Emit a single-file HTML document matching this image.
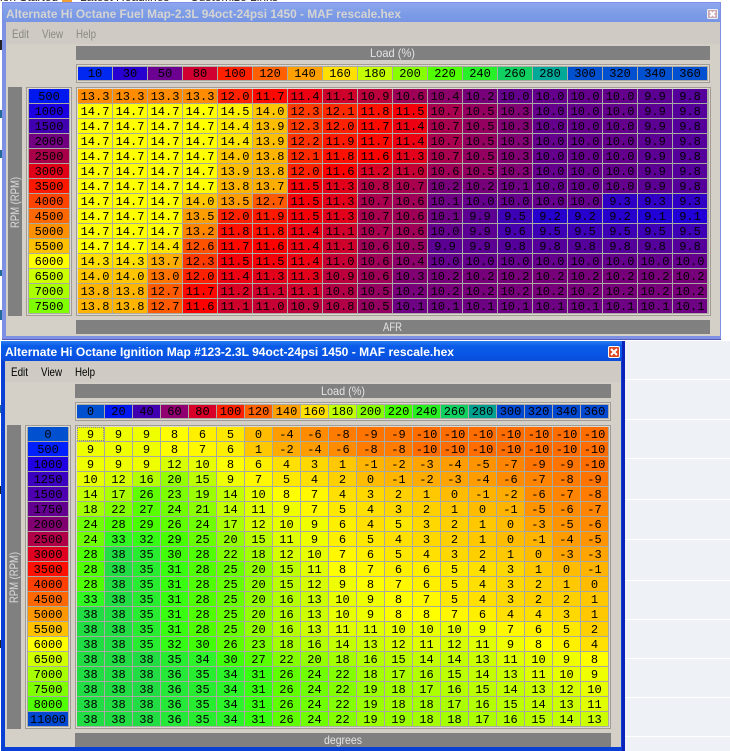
<!DOCTYPE html>
<html><head><meta charset="utf-8"><style>
html,body{margin:0;padding:0;background:#fff}
#p{position:relative;width:730px;height:751px;overflow:hidden;background:#fff;font-family:"Liberation Sans",sans-serif}
.a{position:absolute;box-sizing:border-box}
.g{position:absolute;display:grid;gap:1px;font:12px/16px "Liberation Mono",monospace;color:#000;text-align:center;background:#a8a8a2}
.g i{font-style:normal;display:block;overflow:hidden}
.f{box-sizing:border-box;position:absolute;background:#aaa9a2;border:1px solid #a09c94;box-shadow:inset 0 0 0 1px #dcd9d2}
.bar{position:absolute;background:#808080}
.c18{grid-template-columns:repeat(18,34px);grid-auto-rows:14px}
.c19{grid-template-columns:repeat(19,27px);grid-auto-rows:14px}
.h18{grid-template-columns:repeat(18,34px);grid-auto-rows:13px;line-height:14px}
.h19{grid-template-columns:repeat(19,27px);grid-auto-rows:13px;line-height:14px}
.r{grid-template-columns:40px;grid-auto-rows:14px}
.a147{background:#ffff00}.a145{background:#ffef00}.a144{background:#ffe600}.a143{background:#ffde00}.a140{background:#ffc500}.a139{background:#ffbd00}.a138{background:#ffb500}.a137{background:#ffad00}.a135{background:#ff9c00}.a133{background:#ff8c00}.a132{background:#ff8400}.a130{background:#ff7300}.a127{background:#ff5a00}.a126{background:#ff5200}.a123{background:#ff3a00}.a122{background:#ff3100}.a121{background:#ff2900}.a120{background:#ff2100}.a119{background:#ff1900}.a118{background:#ff1000}.a117{background:#ff0800}.a116{background:#ff0000}.a115{background:#f50009}.a114{background:#ec0012}.a113{background:#e2001a}.a112{background:#d80023}.a111{background:#ce002c}.a110{background:#c50034}.a109{background:#bb003d}.a108{background:#b10046}.a107{background:#a8004f}.a106{background:#9e0057}.a105{background:#940060}.a104{background:#8b0069}.a103{background:#810072}.a102{background:#77007a}.a101{background:#6e0083}.a100{background:#64008c}.a99{background:#5c0094}.a98{background:#55009b}.a96{background:#4600ac}.a95{background:#3e00b4}.a93{background:#3000c5}.a92{background:#2800cd}.a91{background:#2000d6}
.bn10{background:#ff6c00}.bn9{background:#ff7400}.bn8{background:#ff7c00}.bn7{background:#ff8400}.bn6{background:#ff8c00}.bn5{background:#ff9400}.bn4{background:#ff9c00}.bn3{background:#ffa400}.bn2{background:#ffac00}.bn1{background:#ffb400}.b0{background:#ffbc00}.b1{background:#ffc800}.b2{background:#ffd000}.b3{background:#ffd800}.b4{background:#ffe000}.b5{background:#ffe800}.b6{background:#fff000}.b7{background:#fff800}.b8{background:#ffff00}.b9{background:#f0ff00}.b10{background:#e8ff00}.b11{background:#e0ff00}.b12{background:#d8ff00}.b13{background:#ccff00}.b14{background:#c4ff00}.b15{background:#bcff00}.b16{background:#b4ff00}.b17{background:#acff00}.b18{background:#a4ff00}.b19{background:#9cff00}.b20{background:#94ff00}.b21{background:#8cff00}.b22{background:#84ff00}.b23{background:#7cff00}.b24{background:#70ff00}.b25{background:#68ff00}.b26{background:#60ff00}.b27{background:#58ff00}.b28{background:#50ff00}.b29{background:#48ff00}.b30{background:#40ff08}.b31{background:#38ff10}.b32{background:#34fc14}.b33{background:#30f820}.b34{background:#2cf428}.b35{background:#28ec30}.b36{background:#26e838}.b38{background:#22dc44}
</style></head><body><div id="p">

<!-- background page fragments -->
<div class="a" style="left:0;top:-10px;width:721px;height:13px;font-size:12px;line-height:14px;white-space:nowrap;color:#222"><span class="a" style="left:0">ion Started</span><span class="a" style="left:80px">Latest Headlines</span><span class="a" style="left:190px">Customize Links</span></div>
<div class="a" style="left:62px;top:0;width:10px;height:3px;background:#f0a030"></div>
<div class="a" style="left:0;top:40px;width:2px;height:10px;background:#222"></div>
<div class="a" style="left:0;top:110px;width:2px;height:8px;background:#246a9a"></div>
<div class="a" style="left:0;top:150px;width:2px;height:8px;background:#246a9a"></div>
<div class="a" style="left:0;top:270px;width:2px;height:6px;background:#246a9a"></div>
<div class="a" style="left:0;top:310px;width:2px;height:10px;background:#246a9a"></div>
<div class="a" style="left:0;top:405px;width:1px;height:8px;background:#246a9a"></div>
<div class="a" style="left:0;top:486px;width:1px;height:8px;background:#222"></div>
<div class="a" style="left:0;top:640px;width:1px;height:8px;background:#222"></div>
<div class="a" style="left:625px;top:341px;width:105px;height:410px;background:#eef1f6"></div>
<div class="a" style="left:625px;top:379px;width:105px;height:1px;background:#fff"></div>
<div class="a" style="left:625px;top:419px;width:105px;height:1px;background:#fff"></div>
<div class="a" style="left:625px;top:458px;width:105px;height:1px;background:#fff"></div>
<div class="a" style="left:625px;top:499px;width:105px;height:1px;background:#fff"></div>
<div class="a" style="left:625px;top:539px;width:105px;height:1px;background:#fff"></div>
<div class="a" style="left:625px;top:580px;width:105px;height:1px;background:#fff"></div>
<div class="a" style="left:625px;top:619px;width:105px;height:1px;background:#fff"></div>
<div class="a" style="left:625px;top:658px;width:105px;height:1px;background:#fff"></div>
<div class="a" style="left:625px;top:697px;width:105px;height:1px;background:#fff"></div>
<div class="a" style="left:625px;top:736px;width:105px;height:1px;background:#fff"></div>

<!-- WINDOW 1 -->
<div class="a" style="left:2px;top:2px;width:719px;height:338px;background:#7d90e4;border-bottom:1px solid #5a5ab8"></div>
<div class="a" style="left:3px;top:3px;width:717px;height:19px;background:linear-gradient(180deg,#8ea6ee,#7b9be6 60%,#7795e4)"></div>
<div class="a" style="left:6px;top:22px;width:714px;height:314px;background:#d4d0c8"></div>
<div class="a" style="left:6px;top:22px;width:714px;height:22px;background:#cfcbc4"></div>

<div class="bar" style="left:76px;top:46px;width:634px;height:14px"></div>
<div class="f" style="left:76px;top:64px;width:634px;height:19px"></div>
<div class="g h18" style="left:78px;top:67px;background:#aaa9a2"><i style="background:#0028f0">10</i><i style="background:#2800d0">30</i><i style="background:#6c0090">50</i><i style="background:#d00030">80</i><i style="background:#ff2000">100</i><i style="background:#ff6000">120</i><i style="background:#ffa000">140</i><i style="background:#ffe000">160</i><i style="background:#c4ff00">180</i><i style="background:#88ff00">200</i><i style="background:#50ff00">220</i><i style="background:#28f028">240</i><i style="background:#10d060">260</i><i style="background:#00a898">280</i><i style="background:#0050d0">300</i><i style="background:#0050d0">320</i><i style="background:#0050d0">340</i><i style="background:#0050d0">360</i></div>

<div class="bar" style="left:8px;top:87px;width:14px;height:229px"></div>
<div class="f" style="left:26px;top:87px;width:46px;height:229px"></div>
<div class="g r" style="left:29px;top:89px;background:#aaa9a2"><i style="background:#0018f0">500</i><i style="background:#1c00e0">1000</i><i style="background:#4000b0">1500</i><i style="background:#700080">2000</i><i style="background:#a80048">2500</i><i style="background:#e00018">3000</i><i style="background:#ff1800">3500</i><i style="background:#ff4400">4000</i><i style="background:#ff6800">4500</i><i style="background:#ff9000">5000</i><i style="background:#ffc000">5500</i><i style="background:#ffff00">6000</i><i style="background:#ccff00">6500</i><i style="background:#aaff00">7000</i><i style="background:#80ff00">7500</i></div>

<div class="f" style="left:76px;top:87px;width:635px;height:229px"></div>
<div class="g c18" style="left:78px;top:89px">
<i class=a133>13.3</i><i class=a133>13.3</i><i class=a133>13.3</i><i class=a133>13.3</i><i class=a120>12.0</i><i class=a117>11.7</i><i class=a114>11.4</i><i class=a111>11.1</i><i class=a109>10.9</i><i class=a106>10.6</i><i class=a104>10.4</i><i class=a102>10.2</i><i class=a100>10.0</i><i class=a100>10.0</i><i class=a100>10.0</i><i class=a100>10.0</i><i class=a99>9.9</i><i class=a98>9.8</i>
<i class=a147>14.7</i><i class=a147>14.7</i><i class=a147>14.7</i><i class=a147>14.7</i><i class=a145>14.5</i><i class=a140>14.0</i><i class=a123>12.3</i><i class=a121>12.1</i><i class=a118>11.8</i><i class=a115>11.5</i><i class=a107>10.7</i><i class=a105>10.5</i><i class=a103>10.3</i><i class=a100>10.0</i><i class=a100>10.0</i><i class=a100>10.0</i><i class=a99>9.9</i><i class=a98>9.8</i>
<i class=a147>14.7</i><i class=a147>14.7</i><i class=a147>14.7</i><i class=a147>14.7</i><i class=a144>14.4</i><i class=a139>13.9</i><i class=a123>12.3</i><i class=a120>12.0</i><i class=a117>11.7</i><i class=a114>11.4</i><i class=a107>10.7</i><i class=a105>10.5</i><i class=a103>10.3</i><i class=a100>10.0</i><i class=a100>10.0</i><i class=a100>10.0</i><i class=a99>9.9</i><i class=a98>9.8</i>
<i class=a147>14.7</i><i class=a147>14.7</i><i class=a147>14.7</i><i class=a147>14.7</i><i class=a144>14.4</i><i class=a139>13.9</i><i class=a122>12.2</i><i class=a119>11.9</i><i class=a117>11.7</i><i class=a114>11.4</i><i class=a107>10.7</i><i class=a105>10.5</i><i class=a103>10.3</i><i class=a100>10.0</i><i class=a100>10.0</i><i class=a100>10.0</i><i class=a99>9.9</i><i class=a98>9.8</i>
<i class=a147>14.7</i><i class=a147>14.7</i><i class=a147>14.7</i><i class=a147>14.7</i><i class=a140>14.0</i><i class=a138>13.8</i><i class=a121>12.1</i><i class=a118>11.8</i><i class=a116>11.6</i><i class=a113>11.3</i><i class=a107>10.7</i><i class=a105>10.5</i><i class=a103>10.3</i><i class=a100>10.0</i><i class=a100>10.0</i><i class=a100>10.0</i><i class=a99>9.9</i><i class=a98>9.8</i>
<i class=a147>14.7</i><i class=a147>14.7</i><i class=a147>14.7</i><i class=a147>14.7</i><i class=a139>13.9</i><i class=a138>13.8</i><i class=a120>12.0</i><i class=a116>11.6</i><i class=a112>11.2</i><i class=a110>11.0</i><i class=a106>10.6</i><i class=a105>10.5</i><i class=a103>10.3</i><i class=a100>10.0</i><i class=a100>10.0</i><i class=a100>10.0</i><i class=a99>9.9</i><i class=a98>9.8</i>
<i class=a147>14.7</i><i class=a147>14.7</i><i class=a147>14.7</i><i class=a147>14.7</i><i class=a138>13.8</i><i class=a137>13.7</i><i class=a115>11.5</i><i class=a113>11.3</i><i class=a108>10.8</i><i class=a107>10.7</i><i class=a102>10.2</i><i class=a102>10.2</i><i class=a101>10.1</i><i class=a100>10.0</i><i class=a100>10.0</i><i class=a100>10.0</i><i class=a99>9.9</i><i class=a98>9.8</i>
<i class=a147>14.7</i><i class=a147>14.7</i><i class=a147>14.7</i><i class=a140>14.0</i><i class=a135>13.5</i><i class=a127>12.7</i><i class=a115>11.5</i><i class=a113>11.3</i><i class=a107>10.7</i><i class=a106>10.6</i><i class=a101>10.1</i><i class=a100>10.0</i><i class=a100>10.0</i><i class=a100>10.0</i><i class=a100>10.0</i><i class=a93>9.3</i><i class=a93>9.3</i><i class=a93>9.3</i>
<i class=a147>14.7</i><i class=a147>14.7</i><i class=a147>14.7</i><i class=a135>13.5</i><i class=a120>12.0</i><i class=a119>11.9</i><i class=a115>11.5</i><i class=a113>11.3</i><i class=a107>10.7</i><i class=a106>10.6</i><i class=a101>10.1</i><i class=a99>9.9</i><i class=a95>9.5</i><i class=a92>9.2</i><i class=a92>9.2</i><i class=a92>9.2</i><i class=a91>9.1</i><i class=a91>9.1</i>
<i class=a147>14.7</i><i class=a147>14.7</i><i class=a147>14.7</i><i class=a132>13.2</i><i class=a118>11.8</i><i class=a118>11.8</i><i class=a114>11.4</i><i class=a111>11.1</i><i class=a107>10.7</i><i class=a106>10.6</i><i class=a100>10.0</i><i class=a99>9.9</i><i class=a96>9.6</i><i class=a95>9.5</i><i class=a95>9.5</i><i class=a95>9.5</i><i class=a95>9.5</i><i class=a95>9.5</i>
<i class=a147>14.7</i><i class=a147>14.7</i><i class=a144>14.4</i><i class=a126>12.6</i><i class=a117>11.7</i><i class=a116>11.6</i><i class=a114>11.4</i><i class=a111>11.1</i><i class=a106>10.6</i><i class=a105>10.5</i><i class=a99>9.9</i><i class=a99>9.9</i><i class=a98>9.8</i><i class=a98>9.8</i><i class=a98>9.8</i><i class=a98>9.8</i><i class=a98>9.8</i><i class=a98>9.8</i>
<i class=a143>14.3</i><i class=a143>14.3</i><i class=a137>13.7</i><i class=a123>12.3</i><i class=a115>11.5</i><i class=a115>11.5</i><i class=a114>11.4</i><i class=a110>11.0</i><i class=a106>10.6</i><i class=a104>10.4</i><i class=a100>10.0</i><i class=a100>10.0</i><i class=a100>10.0</i><i class=a100>10.0</i><i class=a100>10.0</i><i class=a100>10.0</i><i class=a100>10.0</i><i class=a100>10.0</i>
<i class=a140>14.0</i><i class=a140>14.0</i><i class=a130>13.0</i><i class=a120>12.0</i><i class=a114>11.4</i><i class=a113>11.3</i><i class=a113>11.3</i><i class=a109>10.9</i><i class=a106>10.6</i><i class=a103>10.3</i><i class=a102>10.2</i><i class=a102>10.2</i><i class=a102>10.2</i><i class=a102>10.2</i><i class=a102>10.2</i><i class=a102>10.2</i><i class=a102>10.2</i><i class=a102>10.2</i>
<i class=a138>13.8</i><i class=a138>13.8</i><i class=a127>12.7</i><i class=a117>11.7</i><i class=a112>11.2</i><i class=a111>11.1</i><i class=a111>11.1</i><i class=a108>10.8</i><i class=a105>10.5</i><i class=a102>10.2</i><i class=a102>10.2</i><i class=a102>10.2</i><i class=a102>10.2</i><i class=a102>10.2</i><i class=a102>10.2</i><i class=a102>10.2</i><i class=a102>10.2</i><i class=a102>10.2</i>
<i class=a138>13.8</i><i class=a138>13.8</i><i class=a127>12.7</i><i class=a116>11.6</i><i class=a111>11.1</i><i class=a110>11.0</i><i class=a109>10.9</i><i class=a108>10.8</i><i class=a105>10.5</i><i class=a101>10.1</i><i class=a101>10.1</i><i class=a101>10.1</i><i class=a101>10.1</i><i class=a101>10.1</i><i class=a101>10.1</i><i class=a101>10.1</i><i class=a101>10.1</i><i class=a101>10.1</i>
</div>
<div class="bar" style="left:76px;top:320px;width:634px;height:14px"></div>

<!-- WINDOW 2 -->
<div class="a" style="left:1px;top:341px;width:624px;height:410px;background:#0a3fd6;border-right:3px solid #0a22b8"></div>
<div class="a" style="left:1px;top:341px;width:621px;height:20px;background:linear-gradient(180deg,#2a7cf2,#0a5ce8 25%,#0854e4 75%,#0a4cd8)"></div>
<div class="a" style="left:5px;top:361px;width:616px;height:386px;background:#d4d0c8"></div>
<div class="a" style="left:5px;top:361px;width:616px;height:21px;background:#cfcbc4"></div>

<div class="bar" style="left:75px;top:384px;width:536px;height:14px"></div>
<div class="f" style="left:75px;top:402px;width:536px;height:19px"></div>
<div class="g h19" style="left:77px;top:405px;background:#aaa9a2"><i style="background:#0050d0">0</i><i style="background:#0018f0">20</i><i style="background:#4000b0">40</i><i style="background:#900070">60</i><i style="background:#d80028">80</i><i style="background:#ff2000">100</i><i style="background:#ff6000">120</i><i style="background:#ffa000">140</i><i style="background:#ffe000">160</i><i style="background:#c0ff00">180</i><i style="background:#88ff00">200</i><i style="background:#44ff00">220</i><i style="background:#28f020">240</i><i style="background:#10d060">260</i><i style="background:#00a090">280</i><i style="background:#0048d0">300</i><i style="background:#0048d0">320</i><i style="background:#0048d0">340</i><i style="background:#0048d0">360</i></div>

<div class="bar" style="left:7px;top:425px;width:14px;height:304px"></div>
<div class="f" style="left:25px;top:425px;width:46px;height:304px"></div>
<div class="g r" style="left:28px;top:427px;background:#aaa9a2"><i style="background:#0050d0">0</i><i style="background:#0020ff">500</i><i style="background:#2000e0">1000</i><i style="background:#3c00c0">1250</i><i style="background:#4c00b0">1500</i><i style="background:#640090">1750</i><i style="background:#800070">2000</i><i style="background:#b00048">2500</i><i style="background:#e00020">3000</i><i style="background:#ff1000">3500</i><i style="background:#ff4000">4000</i><i style="background:#ff6800">4500</i><i style="background:#ff9800">5000</i><i style="background:#ffc000">5500</i><i style="background:#ffff00">6000</i><i style="background:#d0ff00">6500</i><i style="background:#a8ff00">7000</i><i style="background:#80ff00">7500</i><i style="background:#50ff00">8000</i><i style="background:#0048d0">11000</i></div>

<div class="f" style="left:75px;top:425px;width:536px;height:304px"></div>
<div class="g c19" style="left:77px;top:427px">
<i class=b9 style="outline:1px dotted #888;outline-offset:-1px">9</i><i class=b9>9</i><i class=b9>9</i><i class=b8>8</i><i class=b6>6</i><i class=b5>5</i><i class=b0>0</i><i class=bn4>-4</i><i class=bn6>-6</i><i class=bn8>-8</i><i class=bn9>-9</i><i class=bn9>-9</i><i class=bn10>-10</i><i class=bn10>-10</i><i class=bn10>-10</i><i class=bn10>-10</i><i class=bn10>-10</i><i class=bn10>-10</i><i class=bn10>-10</i>
<i class=b9>9</i><i class=b9>9</i><i class=b9>9</i><i class=b8>8</i><i class=b7>7</i><i class=b6>6</i><i class=b1>1</i><i class=bn2>-2</i><i class=bn4>-4</i><i class=bn6>-6</i><i class=bn8>-8</i><i class=bn8>-8</i><i class=bn10>-10</i><i class=bn10>-10</i><i class=bn10>-10</i><i class=bn10>-10</i><i class=bn10>-10</i><i class=bn10>-10</i><i class=bn10>-10</i>
<i class=b9>9</i><i class=b9>9</i><i class=b9>9</i><i class=b12>12</i><i class=b10>10</i><i class=b8>8</i><i class=b6>6</i><i class=b4>4</i><i class=b3>3</i><i class=b1>1</i><i class=bn1>-1</i><i class=bn2>-2</i><i class=bn3>-3</i><i class=bn4>-4</i><i class=bn5>-5</i><i class=bn7>-7</i><i class=bn9>-9</i><i class=bn9>-9</i><i class=bn10>-10</i>
<i class=b10>10</i><i class=b12>12</i><i class=b16>16</i><i class=b20>20</i><i class=b15>15</i><i class=b9>9</i><i class=b7>7</i><i class=b5>5</i><i class=b4>4</i><i class=b2>2</i><i class=b0>0</i><i class=bn1>-1</i><i class=bn2>-2</i><i class=bn3>-3</i><i class=bn4>-4</i><i class=bn6>-6</i><i class=bn7>-7</i><i class=bn8>-8</i><i class=bn9>-9</i>
<i class=b14>14</i><i class=b17>17</i><i class=b26>26</i><i class=b23>23</i><i class=b19>19</i><i class=b14>14</i><i class=b10>10</i><i class=b8>8</i><i class=b7>7</i><i class=b4>4</i><i class=b3>3</i><i class=b2>2</i><i class=b1>1</i><i class=b0>0</i><i class=bn1>-1</i><i class=bn2>-2</i><i class=bn6>-6</i><i class=bn7>-7</i><i class=bn8>-8</i>
<i class=b18>18</i><i class=b22>22</i><i class=b27>27</i><i class=b24>24</i><i class=b21>21</i><i class=b14>14</i><i class=b11>11</i><i class=b9>9</i><i class=b7>7</i><i class=b5>5</i><i class=b4>4</i><i class=b3>3</i><i class=b2>2</i><i class=b1>1</i><i class=b0>0</i><i class=bn1>-1</i><i class=bn5>-5</i><i class=bn6>-6</i><i class=bn7>-7</i>
<i class=b24>24</i><i class=b28>28</i><i class=b29>29</i><i class=b26>26</i><i class=b24>24</i><i class=b17>17</i><i class=b12>12</i><i class=b10>10</i><i class=b9>9</i><i class=b6>6</i><i class=b4>4</i><i class=b5>5</i><i class=b3>3</i><i class=b2>2</i><i class=b1>1</i><i class=b0>0</i><i class=bn3>-3</i><i class=bn5>-5</i><i class=bn6>-6</i>
<i class=b24>24</i><i class=b33>33</i><i class=b32>32</i><i class=b29>29</i><i class=b25>25</i><i class=b20>20</i><i class=b15>15</i><i class=b11>11</i><i class=b9>9</i><i class=b6>6</i><i class=b5>5</i><i class=b4>4</i><i class=b3>3</i><i class=b2>2</i><i class=b1>1</i><i class=b0>0</i><i class=bn1>-1</i><i class=bn4>-4</i><i class=bn5>-5</i>
<i class=b28>28</i><i class=b38>38</i><i class=b35>35</i><i class=b30>30</i><i class=b28>28</i><i class=b22>22</i><i class=b18>18</i><i class=b12>12</i><i class=b10>10</i><i class=b7>7</i><i class=b6>6</i><i class=b5>5</i><i class=b4>4</i><i class=b3>3</i><i class=b2>2</i><i class=b1>1</i><i class=b0>0</i><i class=bn3>-3</i><i class=bn3>-3</i>
<i class=b28>28</i><i class=b38>38</i><i class=b35>35</i><i class=b31>31</i><i class=b28>28</i><i class=b25>25</i><i class=b20>20</i><i class=b15>15</i><i class=b11>11</i><i class=b8>8</i><i class=b7>7</i><i class=b6>6</i><i class=b6>6</i><i class=b5>5</i><i class=b4>4</i><i class=b3>3</i><i class=b1>1</i><i class=b0>0</i><i class=bn1>-1</i>
<i class=b28>28</i><i class=b38>38</i><i class=b35>35</i><i class=b31>31</i><i class=b28>28</i><i class=b25>25</i><i class=b20>20</i><i class=b15>15</i><i class=b12>12</i><i class=b9>9</i><i class=b8>8</i><i class=b7>7</i><i class=b6>6</i><i class=b5>5</i><i class=b4>4</i><i class=b3>3</i><i class=b2>2</i><i class=b1>1</i><i class=b0>0</i>
<i class=b33>33</i><i class=b38>38</i><i class=b35>35</i><i class=b31>31</i><i class=b28>28</i><i class=b25>25</i><i class=b20>20</i><i class=b16>16</i><i class=b13>13</i><i class=b10>10</i><i class=b9>9</i><i class=b8>8</i><i class=b7>7</i><i class=b5>5</i><i class=b4>4</i><i class=b3>3</i><i class=b2>2</i><i class=b2>2</i><i class=b1>1</i>
<i class=b38>38</i><i class=b38>38</i><i class=b35>35</i><i class=b31>31</i><i class=b28>28</i><i class=b25>25</i><i class=b20>20</i><i class=b16>16</i><i class=b13>13</i><i class=b10>10</i><i class=b9>9</i><i class=b8>8</i><i class=b8>8</i><i class=b7>7</i><i class=b6>6</i><i class=b4>4</i><i class=b4>4</i><i class=b3>3</i><i class=b1>1</i>
<i class=b38>38</i><i class=b38>38</i><i class=b35>35</i><i class=b31>31</i><i class=b28>28</i><i class=b25>25</i><i class=b20>20</i><i class=b16>16</i><i class=b13>13</i><i class=b11>11</i><i class=b11>11</i><i class=b10>10</i><i class=b10>10</i><i class=b10>10</i><i class=b9>9</i><i class=b7>7</i><i class=b6>6</i><i class=b5>5</i><i class=b2>2</i>
<i class=b38>38</i><i class=b38>38</i><i class=b35>35</i><i class=b32>32</i><i class=b30>30</i><i class=b26>26</i><i class=b23>23</i><i class=b18>18</i><i class=b16>16</i><i class=b14>14</i><i class=b13>13</i><i class=b12>12</i><i class=b11>11</i><i class=b12>12</i><i class=b11>11</i><i class=b9>9</i><i class=b8>8</i><i class=b6>6</i><i class=b4>4</i>
<i class=b38>38</i><i class=b38>38</i><i class=b38>38</i><i class=b35>35</i><i class=b34>34</i><i class=b30>30</i><i class=b27>27</i><i class=b22>22</i><i class=b20>20</i><i class=b18>18</i><i class=b16>16</i><i class=b15>15</i><i class=b14>14</i><i class=b14>14</i><i class=b13>13</i><i class=b11>11</i><i class=b10>10</i><i class=b9>9</i><i class=b8>8</i>
<i class=b38>38</i><i class=b38>38</i><i class=b38>38</i><i class=b36>36</i><i class=b35>35</i><i class=b34>34</i><i class=b31>31</i><i class=b26>26</i><i class=b24>24</i><i class=b22>22</i><i class=b18>18</i><i class=b17>17</i><i class=b16>16</i><i class=b15>15</i><i class=b14>14</i><i class=b13>13</i><i class=b11>11</i><i class=b10>10</i><i class=b9>9</i>
<i class=b38>38</i><i class=b38>38</i><i class=b38>38</i><i class=b36>36</i><i class=b35>35</i><i class=b34>34</i><i class=b31>31</i><i class=b26>26</i><i class=b24>24</i><i class=b22>22</i><i class=b19>19</i><i class=b18>18</i><i class=b17>17</i><i class=b16>16</i><i class=b15>15</i><i class=b14>14</i><i class=b13>13</i><i class=b12>12</i><i class=b10>10</i>
<i class=b38>38</i><i class=b38>38</i><i class=b38>38</i><i class=b36>36</i><i class=b35>35</i><i class=b34>34</i><i class=b31>31</i><i class=b26>26</i><i class=b24>24</i><i class=b22>22</i><i class=b19>19</i><i class=b18>18</i><i class=b18>18</i><i class=b17>17</i><i class=b16>16</i><i class=b15>15</i><i class=b14>14</i><i class=b13>13</i><i class=b11>11</i>
<i class=b38>38</i><i class=b38>38</i><i class=b38>38</i><i class=b36>36</i><i class=b35>35</i><i class=b34>34</i><i class=b31>31</i><i class=b26>26</i><i class=b24>24</i><i class=b22>22</i><i class=b19>19</i><i class=b19>19</i><i class=b18>18</i><i class=b18>18</i><i class=b17>17</i><i class=b16>16</i><i class=b15>15</i><i class=b14>14</i><i class=b13>13</i>
</div>
<div class="bar" style="left:75px;top:733px;width:536px;height:14px"></div>

<!-- Labels and close buttons -->
<svg class="a" style="left:0;top:0" width="730" height="751" font-family="Liberation Sans, sans-serif" font-size="12">
<text x="6" y="18" textLength="395" lengthAdjust="spacingAndGlyphs" font-weight="bold" fill="#d6d4d2">Alternate Hi Octane Fuel Map-2.3L 94oct-24psi 1450 - MAF rescale.hex</text>
<text x="12" y="38" textLength="17" lengthAdjust="spacingAndGlyphs" fill="#8a8884">Edit</text>
<text x="42" y="38" textLength="21" lengthAdjust="spacingAndGlyphs" fill="#8a8884">View</text>
<text x="76" y="38" textLength="20" lengthAdjust="spacingAndGlyphs" fill="#8a8884">Help</text>
<text x="370" y="57" textLength="45" lengthAdjust="spacingAndGlyphs" fill="#e4e4e4">Load (%)</text>
<text x="383" y="331" textLength="19" lengthAdjust="spacingAndGlyphs" fill="#e4e4e4">AFR</text>
<text x="19" y="228" textLength="51" lengthAdjust="spacingAndGlyphs" fill="#dcdcdc" transform="rotate(-90 19 228)">RPM (RPM)</text>

<text x="5" y="356" textLength="449" lengthAdjust="spacingAndGlyphs" font-weight="bold" fill="#fff">Alternate Hi Octane Ignition Map #123-2.3L 94oct-24psi 1450 - MAF rescale.hex</text>
<text x="11" y="376" textLength="17" lengthAdjust="spacingAndGlyphs" fill="#000">Edit</text>
<text x="41" y="376" textLength="21" lengthAdjust="spacingAndGlyphs" fill="#000">View</text>
<text x="75" y="376" textLength="20" lengthAdjust="spacingAndGlyphs" fill="#000">Help</text>
<text x="321" y="395" textLength="44" lengthAdjust="spacingAndGlyphs" fill="#e4e4e4">Load (%)</text>
<text x="324" y="744" textLength="38" lengthAdjust="spacingAndGlyphs" fill="#e4e4e4">degrees</text>
<text x="18" y="603" textLength="51" lengthAdjust="spacingAndGlyphs" fill="#dcdcdc" transform="rotate(-90 18 603)">RPM (RPM)</text>

<rect x="707.5" y="9.5" width="10" height="9" rx="1" fill="#c8a8b4" stroke="#f0f0f4"/>
<path d="M710 11.5l5 5M715 11.5l-5 5" stroke="#fff" stroke-width="2"/>
<rect x="608.5" y="346.5" width="11" height="11" rx="1.5" fill="#dc4a24" stroke="#fff"/>
<path d="M611 349l6 6M617 349l-6 6" stroke="#fff" stroke-width="2"/>
</svg>
</div></body></html>
